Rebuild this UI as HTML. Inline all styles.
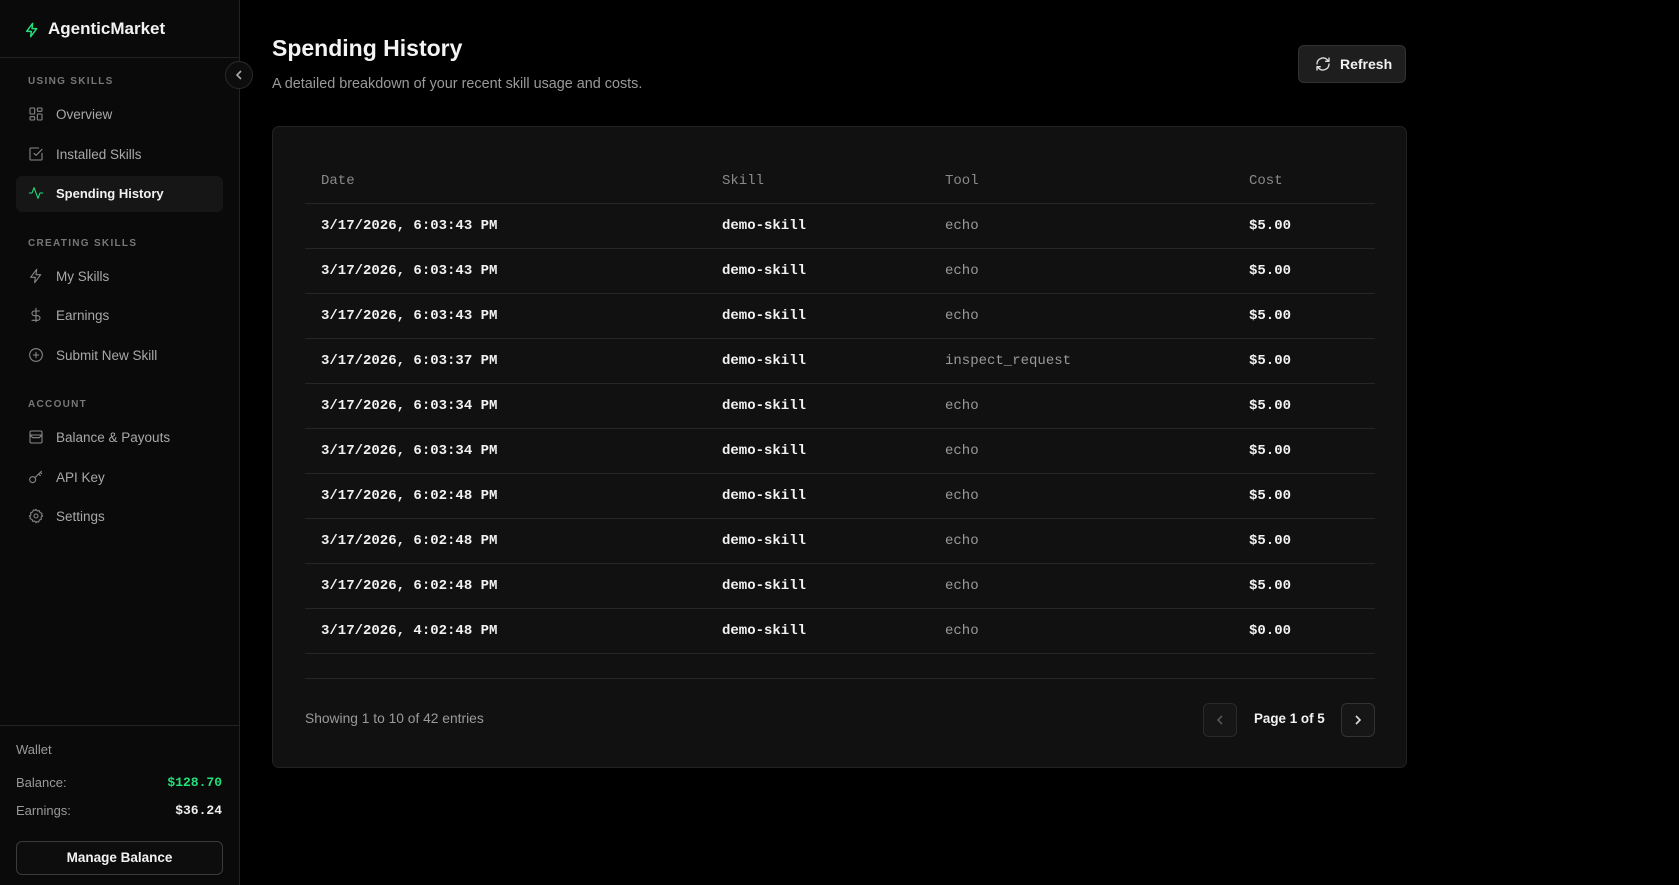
<!DOCTYPE html>
<html><head><meta charset="utf-8"><style>
*{box-sizing:border-box;margin:0;padding:0}
body{width:1679px;height:885px;background:#000;font-family:"Liberation Sans",sans-serif;color:#fff;position:relative;overflow:hidden}
.a{position:absolute;white-space:nowrap}
.side{position:absolute;left:0;top:0;width:240px;height:885px;background:#0a0a0a;border-right:1px solid #222}
.nav{position:absolute;left:28px;font-size:13.5px;color:#a8a8a8;display:flex;align-items:center;gap:10px}
.nav svg{width:16px;height:16px;fill:none;stroke:#8a8a8a;stroke-width:1.6;stroke-linecap:round;stroke-linejoin:round;margin-right:2px}
.lab{position:absolute;left:28px;font-size:10px;letter-spacing:1.3px;color:#777;font-weight:bold}
.mono{font-family:"Liberation Mono",monospace}
.card{position:absolute;left:272px;top:126px;width:1135px;height:642px;background:#111;border:1px solid #222;border-radius:7px}
.hl{position:absolute;left:305px;width:1070px;height:1px;background:#262626}
.th{position:absolute;top:173px;font-size:14px;color:#8a8a8a}
.td{position:absolute;font-size:14px}
.pb{position:absolute;top:703px;width:34px;height:34px;border:1px solid #2a2a2a;border-radius:6px;background:#161616}
.rd{color:#f2f2f2;font-weight:bold}.rt{color:#9a9a9a}
</style></head><body>
<div class="side">
  <div style="position:absolute;left:0;top:57px;width:240px;height:1px;background:#222"></div>
  <svg class="a" style="left:24px;top:21px" width="16" height="18" viewBox="0 0 24 24" fill="none" stroke="#22e07a" stroke-width="2.2" stroke-linejoin="round"><path d="M13 2L4 14h7l-1 8 9-12h-7z"/></svg>
  <div class="a" style="left:48px;top:19px;font-size:17px;font-weight:bold;color:#f2f2f2">AgenticMarket</div>
  <div class="lab" style="top:76px">USING SKILLS</div>
  <div class="nav" style="top:106px"><svg viewBox="0 0 24 24"><rect x="3" y="3" width="7" height="9" rx="1"/><rect x="14" y="3" width="7" height="5" rx="1"/><rect x="14" y="12" width="7" height="9" rx="1"/><rect x="3" y="16" width="7" height="5" rx="1"/></svg>Overview</div>
  <div class="nav" style="top:146px"><svg viewBox="0 0 24 24"><path d="M21 11v9a1 1 0 0 1-1 1H4a1 1 0 0 1-1-1V4a1 1 0 0 1 1-1h12"/><path d="M9 11l3 3 9-9"/></svg>Installed Skills</div>
  <div style="position:absolute;left:16px;top:176px;width:207px;height:36px;background:#161616;border-radius:6px"></div>
  <div class="nav" style="top:185px;color:#f2f2f2;font-weight:bold;font-size:13px"><svg viewBox="0 0 24 24" style="stroke:#22e07a"><path d="M2 12h4l3-8 6 16 3-8h4"/></svg>Spending History</div>
  <div class="lab" style="top:238px">CREATING SKILLS</div>
  <div class="nav" style="top:268px"><svg viewBox="0 0 24 24"><path d="M13 2L4 14h7l-1 8 9-12h-7z"/></svg>My Skills</div>
  <div class="nav" style="top:307px"><svg viewBox="0 0 24 24"><path d="M12 2v20M17 6H9.5a3.5 3.5 0 0 0 0 7h5a3.5 3.5 0 0 1 0 7H6"/></svg>Earnings</div>
  <div class="nav" style="top:347px"><svg viewBox="0 0 24 24"><circle cx="12" cy="12" r="9.5"/><path d="M12 8v8M8 12h8"/></svg>Submit New Skill</div>
  <div class="lab" style="top:399px">ACCOUNT</div>
  <div class="nav" style="top:429px"><svg viewBox="0 0 24 24"><rect x="3" y="3" width="18" height="18" rx="2"/><path d="M3 9h18M3 9l4 4h10l4-4"/></svg>Balance &amp; Payouts</div>
  <div class="nav" style="top:469px"><svg viewBox="0 0 24 24"><circle cx="7" cy="16" r="4.5"/><path d="M10.5 13L20 3.5M16 7.5l2.5 2.5M18.5 5l2 2"/></svg>API Key</div>
  <div class="nav" style="top:508px"><svg viewBox="0 0 24 24"><circle cx="12" cy="12" r="3"/><path d="M12 2l2 2.5 3-.5 1 3 3 1-.5 3L22 12l-2.5 2 .5 3-3 1-1 3-3-.5L12 22l-2-2.5-3 .5-1-3-3-1 .5-3L2 12l2.5-2-.5-3 3-1 1-3 3 .5z"/></svg>Settings</div>
  <div style="position:absolute;left:0;top:725px;width:240px;height:1px;background:#222"></div>
  <div class="a" style="left:16px;top:742px;font-size:13px;color:#9a9a9a">Wallet</div>
  <div class="a" style="left:16px;top:775px;font-size:13px;color:#9a9a9a">Balance:</div>
  <div class="a mono" style="right:17px;top:775px;font-size:13px;color:#22e07a;font-weight:bold">$128.70</div>
  <div class="a" style="left:16px;top:803px;font-size:13px;color:#9a9a9a">Earnings:</div>
  <div class="a mono" style="right:17px;top:803px;font-size:13px;color:#eee;font-weight:bold">$36.24</div>
  <div style="position:absolute;left:16px;top:841px;width:207px;height:34px;border:1px solid #3a3a3a;border-radius:6px;background:#0d0d0d;text-align:center;line-height:32px;font-size:13.5px;font-weight:bold;color:#f2f2f2">Manage Balance</div>
</div>
<div class="a" style="left:272px;top:35px;font-size:23px;font-weight:bold;color:#f4f4f4">Spending History</div>
<div class="a" style="left:272px;top:76px;font-size:14.4px;color:#9a9a9a">A detailed breakdown of your recent skill usage and costs.</div>
<div style="position:absolute;left:1298px;top:45px;width:108px;height:38px;background:#1e1e1e;border:1px solid #333;border-radius:6px"></div>
<svg class="a" style="left:1315px;top:56px" width="16" height="16" viewBox="0 0 24 24" fill="none" stroke="#ddd" stroke-width="2" stroke-linecap="round" stroke-linejoin="round"><path d="M3 12a9 9 0 0 1 15.5-6.2L21 8M21 3v5h-5M21 12a9 9 0 0 1-15.5 6.2L3 16M3 21v-5h5"/></svg>
<div class="a" style="left:1340px;top:56px;font-size:14px;font-weight:bold;color:#f2f2f2">Refresh</div>
<div class="card"></div>
<div class="th mono" style="left:321px">Date</div>
<div class="th mono" style="left:722px">Skill</div>
<div class="th mono" style="left:945px">Tool</div>
<div class="th mono" style="left:1249px">Cost</div>
<div class="hl" style="top:203px"></div>
<div class="hl" style="top:678px"></div>
<div class="a" style="left:305px;top:711px;font-size:13.8px;color:#9a9a9a">Showing 1 to 10 of 42 entries</div>
<div class="pb" style="left:1203px"><svg width="32" height="32" viewBox="0 0 32 32" fill="none" stroke="#555" stroke-width="1.6"><path d="M18 12l-4 4 4 4"/></svg></div>
<div class="a" style="left:1254px;top:711px;font-size:13.4px;font-weight:bold;color:#f2f2f2">Page 1 of 5</div>
<div class="pb" style="left:1341px;border-color:#333"><svg width="32" height="32" viewBox="0 0 32 32" fill="none" stroke="#ddd" stroke-width="1.6"><path d="M14 12l4 4-4 4"/></svg></div>
<div class="td mono rd" style="left:321px;top:218px">3/17/2026, 6:03:43 PM</div><div class="td mono rd" style="left:722px;top:218px">demo-skill</div><div class="td mono rt" style="left:945px;top:218px">echo</div><div class="td mono rd" style="left:1249px;top:218px">$5.00</div><div class="hl" style="top:248px"></div>
<div class="td mono rd" style="left:321px;top:263px">3/17/2026, 6:03:43 PM</div><div class="td mono rd" style="left:722px;top:263px">demo-skill</div><div class="td mono rt" style="left:945px;top:263px">echo</div><div class="td mono rd" style="left:1249px;top:263px">$5.00</div><div class="hl" style="top:293px"></div>
<div class="td mono rd" style="left:321px;top:308px">3/17/2026, 6:03:43 PM</div><div class="td mono rd" style="left:722px;top:308px">demo-skill</div><div class="td mono rt" style="left:945px;top:308px">echo</div><div class="td mono rd" style="left:1249px;top:308px">$5.00</div><div class="hl" style="top:338px"></div>
<div class="td mono rd" style="left:321px;top:353px">3/17/2026, 6:03:37 PM</div><div class="td mono rd" style="left:722px;top:353px">demo-skill</div><div class="td mono rt" style="left:945px;top:353px">inspect_request</div><div class="td mono rd" style="left:1249px;top:353px">$5.00</div><div class="hl" style="top:383px"></div>
<div class="td mono rd" style="left:321px;top:398px">3/17/2026, 6:03:34 PM</div><div class="td mono rd" style="left:722px;top:398px">demo-skill</div><div class="td mono rt" style="left:945px;top:398px">echo</div><div class="td mono rd" style="left:1249px;top:398px">$5.00</div><div class="hl" style="top:428px"></div>
<div class="td mono rd" style="left:321px;top:443px">3/17/2026, 6:03:34 PM</div><div class="td mono rd" style="left:722px;top:443px">demo-skill</div><div class="td mono rt" style="left:945px;top:443px">echo</div><div class="td mono rd" style="left:1249px;top:443px">$5.00</div><div class="hl" style="top:473px"></div>
<div class="td mono rd" style="left:321px;top:488px">3/17/2026, 6:02:48 PM</div><div class="td mono rd" style="left:722px;top:488px">demo-skill</div><div class="td mono rt" style="left:945px;top:488px">echo</div><div class="td mono rd" style="left:1249px;top:488px">$5.00</div><div class="hl" style="top:518px"></div>
<div class="td mono rd" style="left:321px;top:533px">3/17/2026, 6:02:48 PM</div><div class="td mono rd" style="left:722px;top:533px">demo-skill</div><div class="td mono rt" style="left:945px;top:533px">echo</div><div class="td mono rd" style="left:1249px;top:533px">$5.00</div><div class="hl" style="top:563px"></div>
<div class="td mono rd" style="left:321px;top:578px">3/17/2026, 6:02:48 PM</div><div class="td mono rd" style="left:722px;top:578px">demo-skill</div><div class="td mono rt" style="left:945px;top:578px">echo</div><div class="td mono rd" style="left:1249px;top:578px">$5.00</div><div class="hl" style="top:608px"></div>
<div class="td mono rd" style="left:321px;top:623px">3/17/2026, 4:02:48 PM</div><div class="td mono rd" style="left:722px;top:623px">demo-skill</div><div class="td mono rt" style="left:945px;top:623px">echo</div><div class="td mono rd" style="left:1249px;top:623px">$0.00</div><div class="hl" style="top:653px"></div>
<div style="position:absolute;left:225px;top:61px;width:28px;height:28px;border-radius:50%;background:#0d0d0d;border:1px solid #2a2a2a"><svg width="26" height="26" viewBox="0 0 26 26" fill="none" stroke="#aaa" stroke-width="1.6"><path d="M15 9l-4 4 4 4"/></svg></div>
</body></html>
